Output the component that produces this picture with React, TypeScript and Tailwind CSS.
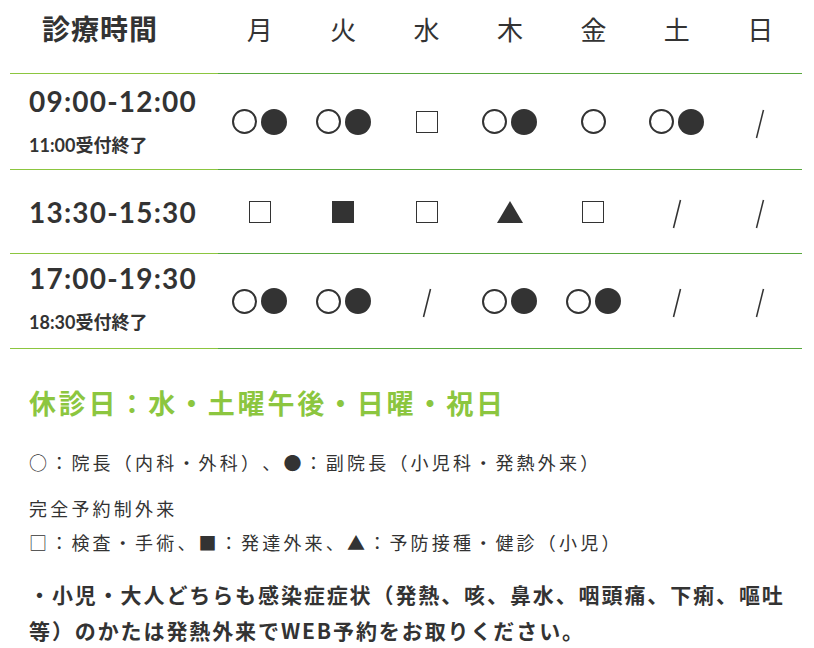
import React from "react";

type Mark = "o" | "oo" | "sq" | "fsq" | "tri" | "none";

const days = ["月", "火", "水", "木", "金", "土", "日"];

const rows: { time: string; note?: string; marks: Mark[]; cls: string }[] = [
  {
    time: "09:00-12:00",
    note: "11:00受付終了",
    marks: ["oo", "oo", "sq", "oo", "o", "oo", "none"],
    cls: "h-[96px] pt-[9px]",
  },
  {
    time: "13:30-15:30",
    marks: ["sq", "fsq", "sq", "tri", "sq", "none", "none"],
    cls: "h-[84px] justify-center",
  },
  {
    time: "17:00-19:30",
    note: "18:30受付終了",
    marks: ["oo", "oo", "none", "oo", "oo", "none", "none"],
    cls: "h-[95px] pt-[6px]",
  },
];

const Circle = () => (
  <span className="block w-[25px] h-[25px] rounded-full border-2 border-[#333]" />
);
const Dot = () => <span className="block w-[26px] h-[26px] rounded-full bg-[#333]" />;

const Symbol = ({ mark }: { mark: Mark }) => {
  if (mark === "oo")
    return (
      <div className="flex items-center gap-[4px]">
        <Circle />
        <Dot />
      </div>
    );
  if (mark === "o") return <Circle />;
  if (mark === "sq")
    return <span className="block w-[22px] h-[22px] border-[1.5px] border-[#333]" />;
  if (mark === "fsq") return <span className="block w-[22px] h-[22px] bg-[#333]" />;
  if (mark === "tri")
    return (
      <svg width="28" height="24" viewBox="0 0 28 24">
        <polygon points="14,1 27,23 1,23" fill="#333" />
      </svg>
    );
  return (
    <svg width="10" height="30" viewBox="0 0 10 30" className="mt-[4px]">
      <line x1="8.5" y1="1" x2="1.5" y2="29" stroke="#333" strokeWidth="1.5" />
    </svg>
  );
};

const jp = { fontFamily: '"Noto Sans CJK JP", sans-serif' };

export default function App() {
  return (
    <div
      className="w-[814px] h-[648px] bg-white text-[#333] overflow-hidden"
      style={{ fontFamily: '"Lato", "Noto Sans CJK JP", sans-serif' }}
    >
      <div className="ml-[10px] w-[792px]">
        {/* header */}
        <div className="flex h-[74px]">
          <div className="w-[208px] border-b border-[#8cc63f] pl-[32px] pt-[9px]">
            <span className="text-[28px] font-bold tracking-[1px] leading-[40px]">診療時間</span>
          </div>
          {days.map((d) => (
            <div
              key={d}
              className="flex-1 border-b border-[#58a83e] flex justify-center pt-[10px] text-[26px] leading-[40px]"
            >
              {d}
            </div>
          ))}
        </div>
        {rows.map((r) => (
          <div key={r.time} className="flex">
            <div
              className={`w-[208px] border-b border-[#8cc63f] pl-[19px] flex flex-col ${r.cls}`}
            >
              <div className="text-[28px] font-bold tracking-[1.2px] leading-[36px]">{r.time}</div>
              {r.note && (
                <div className="text-[18px] font-bold leading-[24px] mt-[14px]">{r.note}</div>
              )}
            </div>
            {r.marks.map((m, i) => (
              <div
                key={i}
                className="flex-1 border-b border-[#58a83e] flex items-center justify-center"
              >
                <Symbol mark={m} />
              </div>
            ))}
          </div>
        ))}
      </div>

      <div className="px-[29px] [text-spacing-trim:space-all]" style={jp}>
        <h2 className="mt-[36px] text-[27px] font-bold leading-[36px] tracking-[2.8px] text-[#8cc63f]">
          休診日：水・土曜午後・日曜・祝日
        </h2>
        <p className="mt-[24px] text-[18px] leading-[34px] tracking-[3.2px]">
          ○：院長（内科・外科）、●：副院長（小児科・発熱外来）
        </p>
        <p className="mt-[12px] text-[18px] leading-[34px] tracking-[3.2px]">
          完全予約制外来
          <br />
          □：検査・手術、■：発達外来、▲：予防接種・健診（小児）
        </p>
        <p className="mt-[17px] text-[21px] font-bold leading-[36px] tracking-[1.9px]">
          ・小児・大人どちらも感染症症状（発熱、咳、鼻水、咽頭痛、下痢、嘔吐等）のかたは発熱外来でWEB予約をお取りください。
        </p>
      </div>
    </div>
  );
}
